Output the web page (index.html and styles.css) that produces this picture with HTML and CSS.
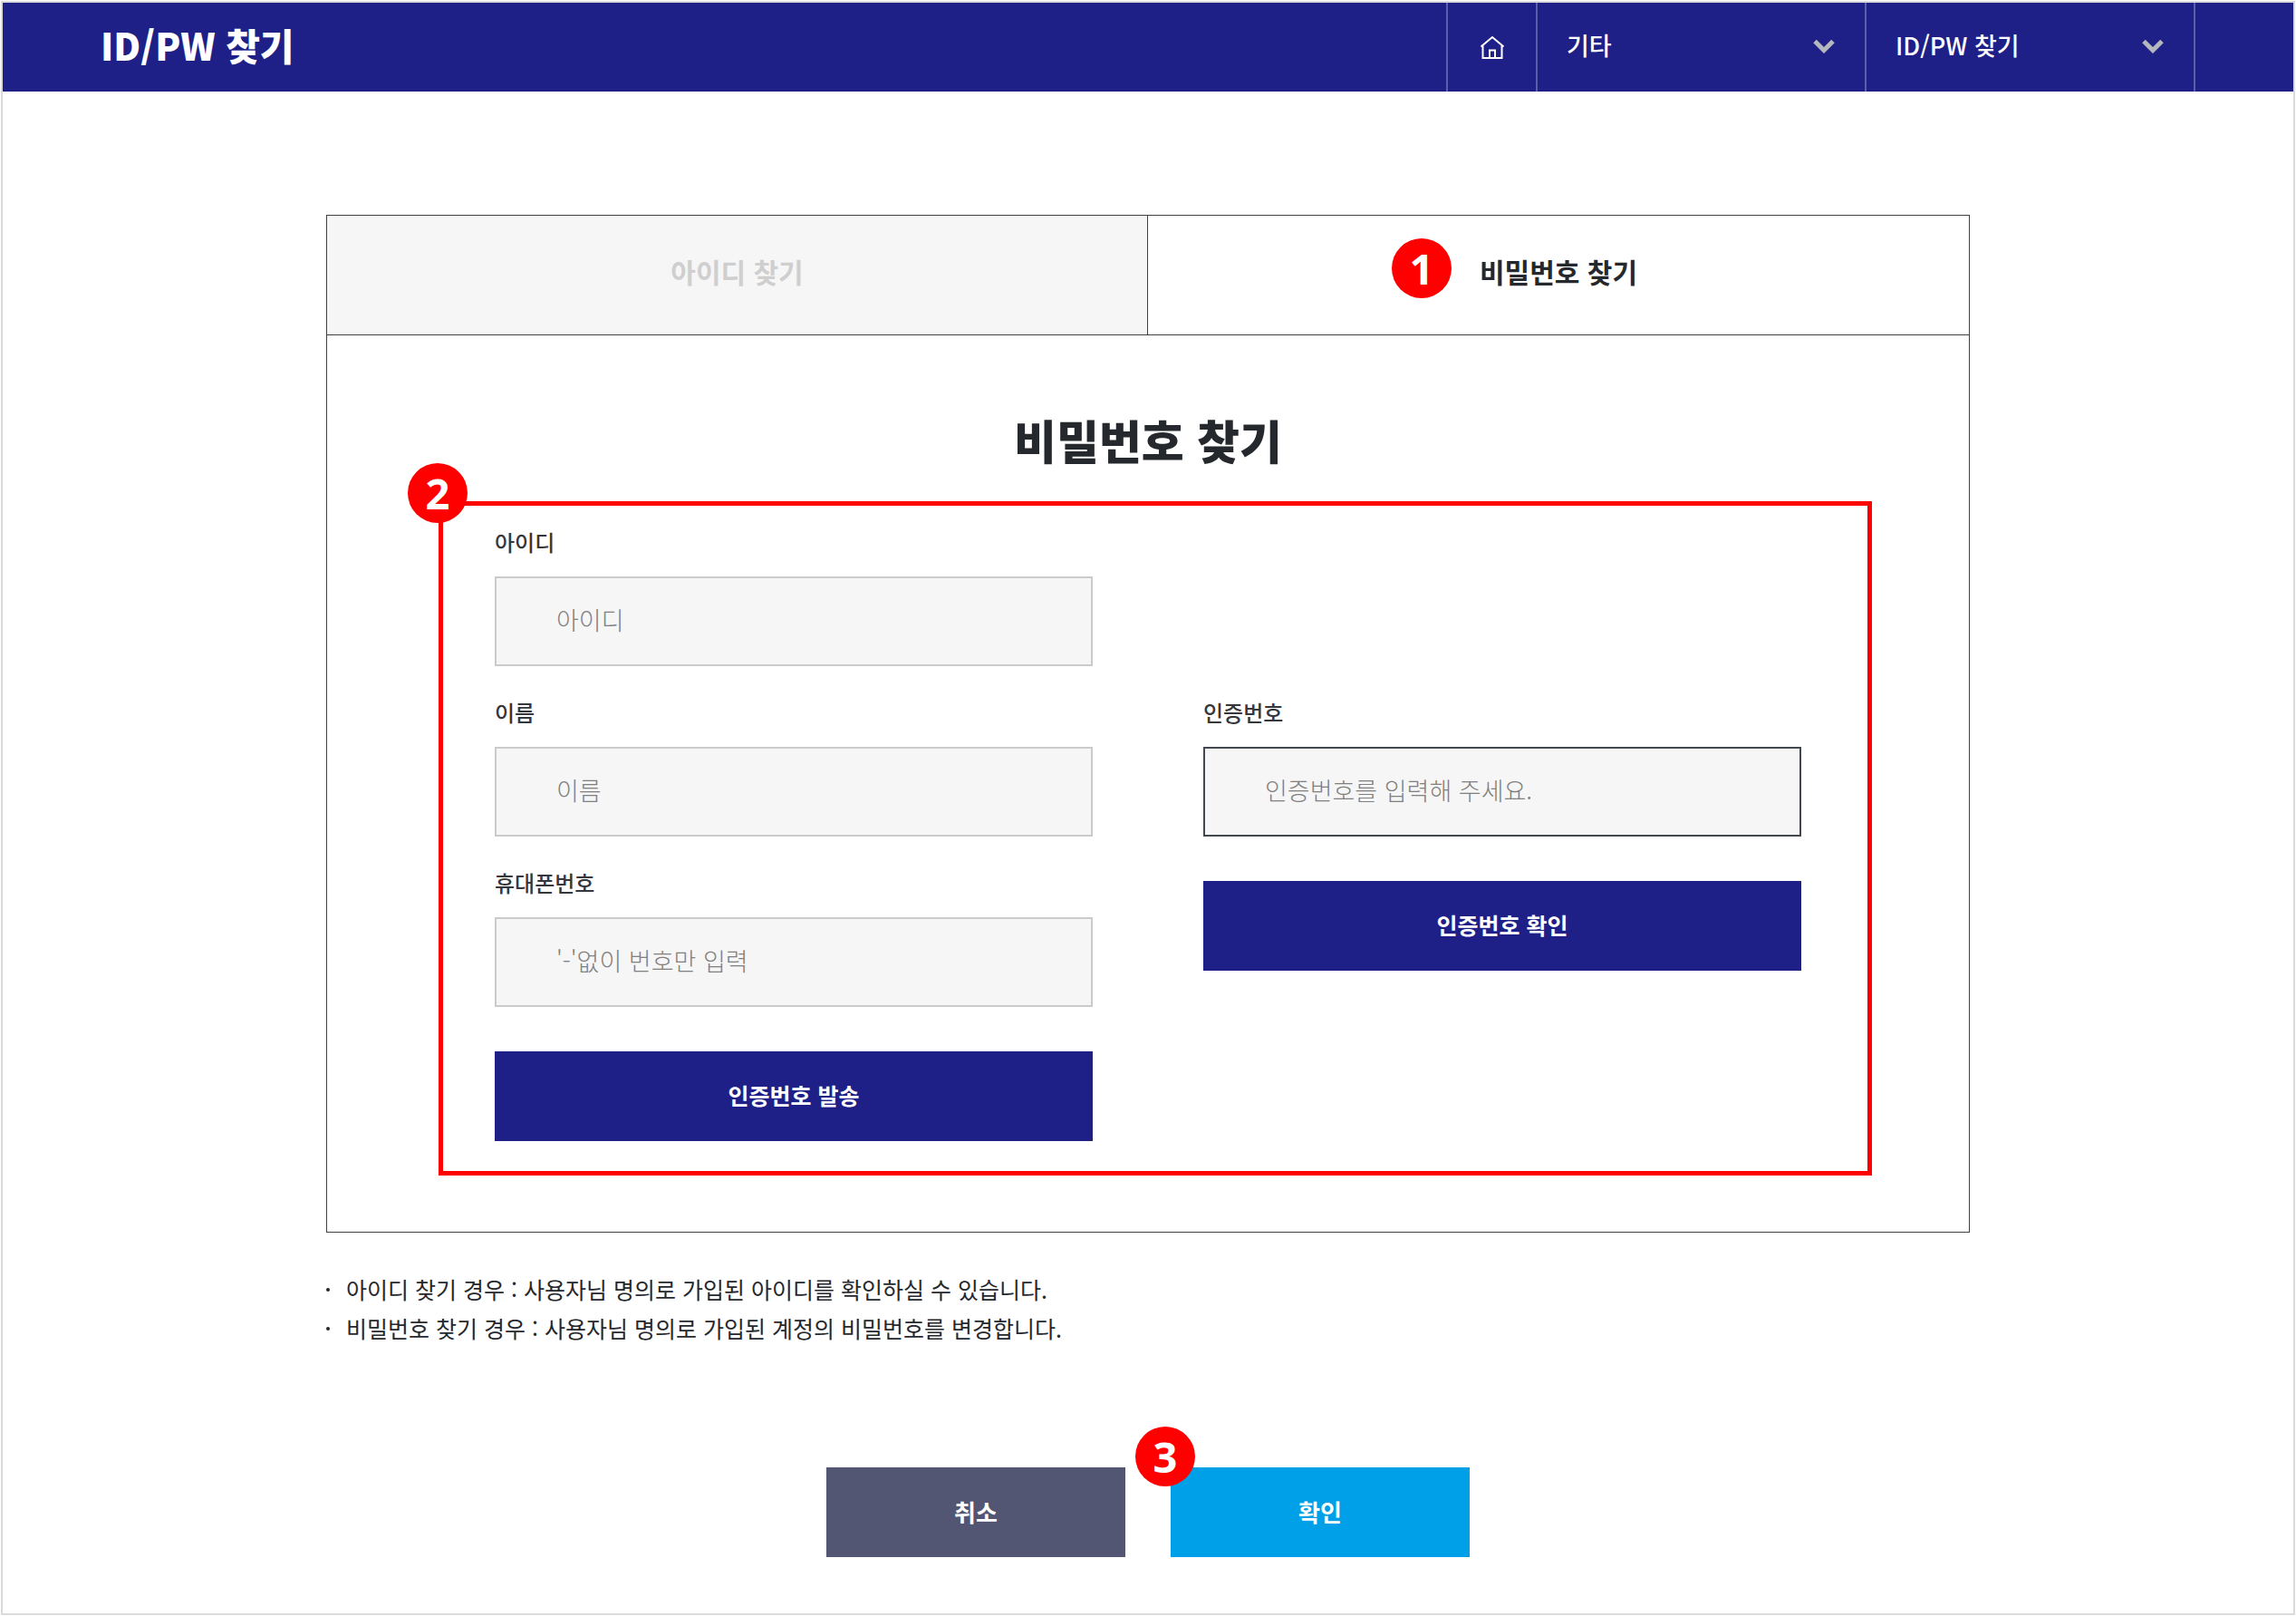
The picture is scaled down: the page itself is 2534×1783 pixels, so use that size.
FILE: index.html
```html
<!DOCTYPE html>
<html lang="ko">
<head>
<meta charset="utf-8">
<meta name="viewport" content="width=device-width, initial-scale=1">
<title>ID/PW 찾기</title>
<link rel="stylesheet" href="styles.css">
</head>
<body>
<div class="page">
  <header class="topbar">
    <h1 class="topbar-title">ID/PW 찾기</h1>
    <nav class="crumbs" aria-label="현재 위치">
      <a class="crumb-home" href="#" aria-label="홈">
        <svg class="home-icon" viewBox="0 0 28 27" aria-hidden="true">
          <path d="M1.5 12.5 14 2 26.500 12.500M3.500 11V25H24.500V11M11 25V16.500H17V25"/>
        </svg>
      </a>
      <div class="crumb">
        <select class="crumb-select" aria-label="메뉴">
          <option>기타</option>
        </select>
        <svg class="chevron" viewBox="0 0 24 16" aria-hidden="true"><path d="M2 2.500 12 12.500 22 2.500"/></svg>
      </div>
      <div class="crumb">
        <select class="crumb-select" aria-label="하위 메뉴">
          <option>ID/PW 찾기</option>
        </select>
        <svg class="chevron" viewBox="0 0 24 16" aria-hidden="true"><path d="M2 2.500 12 12.500 22 2.500"/></svg>
      </div>
    </nav>
  </header>

  <main class="content">
    <section class="panel">
      <div class="tabs" role="tablist">
        <button class="tab" type="button" role="tab" aria-selected="false">아이디 찾기</button>
        <button class="tab tab-active" type="button" role="tab" aria-selected="true">
          <span class="tab-label">비밀번호 찾기<span class="badge badge-tab">1</span></span>
        </button>
      </div>

      <h2 class="panel-title">비밀번호 찾기</h2>

      <form class="form" id="find-form">
        <span class="badge badge-form">2</span>
        <div class="column">
          <div class="field">
            <label class="label" for="user-id">아이디</label>
            <input class="input" id="user-id" type="text" placeholder="아이디">
          </div>
          <div class="field">
            <label class="label" for="user-name">이름</label>
            <input class="input" id="user-name" type="text" placeholder="이름">
          </div>
          <div class="field">
            <label class="label" for="user-phone">휴대폰번호</label>
            <input class="input" id="user-phone" type="tel" placeholder="'-'없이 번호만 입력">
          </div>
          <button class="send" type="button">인증번호 발송</button>
        </div>
        <div class="column column-verify">
          <div class="field">
            <label class="label" for="verify-code">인증번호</label>
            <input class="input input-strong" id="verify-code" type="text" placeholder="인증번호를 입력해 주세요.">
          </div>
          <button class="send" type="button">인증번호 확인</button>
        </div>
      </form>
    </section>

    <ul class="notes">
      <li class="note">아이디 찾기 경우 : 사용자님 명의로 가입된 아이디를 확인하실 수 있습니다.</li>
      <li class="note">비밀번호 찾기 경우 : 사용자님 명의로 가입된 계정의 비밀번호를 변경합니다.</li>
    </ul>

    <div class="actions">
      <button class="action action-cancel" type="button">취소</button>
      <div class="action-slot">
        <button class="action action-ok" type="submit" form="find-form">확인</button>
        <span class="badge badge-ok">3</span>
      </div>
    </div>
  </main>
</div>
</body>
</html>
```
FILE: styles.css
```css
:root {
  --navy: #1e2088;
  --ink: #25282d;
  --line: #3f4044;
  --red: #ff0000;
}

* {
  box-sizing: border-box;
}

body {
  margin: 0;
  padding: 1px;
  background: #fff;
  color: var(--ink);
  font-family: "Noto Sans CJK KR", sans-serif;
}

button,
input,
select {
  margin: 0;
  border: 0;
  border-radius: 0;
  font-family: inherit;
}

button {
  padding: 0;
  cursor: pointer;
}

.page {
  min-height: calc(100vh - 2px);
  border: 2px solid #dadada;
}

/* Top bar */
.topbar {
  display: flex;
  justify-content: space-between;
  height: 98px;
  padding: 0 108px;
  background: var(--navy);
  color: #fff;
}

.topbar-title {
  margin: 0;
  font-size: 41px;
  font-weight: 900;
  line-height: 92px;
}

.crumbs {
  display: flex;
  border-right: 2px solid #5c5ea8;
}

.crumb-home {
  display: flex;
  align-items: center;
  justify-content: center;
  width: 99px;
  border-left: 2px solid #5c5ea8;
}

.home-icon {
  width: 28px;
  height: 27px;
  fill: none;
  stroke: #fff;
  stroke-width: 2;
}

.crumb {
  display: grid;
  align-items: center;
  width: 363px;
  border-left: 2px solid #5c5ea8;
}

.crumb-select {
  grid-area: 1 / 1;
  width: 100%;
  height: 92px;
  align-self: start;
  padding: 0 72px 0 32px;
  appearance: none;
  background: transparent;
  color: #fff;
  font-size: 27px;
  font-weight: 500;
}

.chevron {
  grid-area: 1 / 1;
  justify-self: end;
  width: 24px;
  height: 16px;
  margin: 0 33px 2px 0;
  fill: none;
  stroke: #b4b7bd;
  stroke-width: 5;
  pointer-events: none;
}

/* Content */
.content {
  max-width: 1814px;
  margin: 0 auto;
  padding: 136px 0 62px;
}

.panel {
  border: 1px solid var(--line);
  padding-bottom: 62px;
}

.tabs {
  display: grid;
  grid-template-columns: 1fr 1fr;
  border-bottom: 1px solid var(--line);
}

.tab {
  height: 131px;
  padding-bottom: 9px;
  background: #fff;
  color: var(--ink);
  font-size: 30px;
  font-weight: 700;
}

.tab:first-child {
  border-right: 1px solid var(--line);
  background: #f6f6f6;
  color: #cfcfcf;
}

.tab-label {
  position: relative;
}

.panel-title {
  margin: 78px 0 31px;
  font-size: 51px;
  font-weight: 900;
  line-height: 74px;
  text-align: center;
}

.form {
  position: relative;
  display: grid;
  grid-template-columns: 1fr 1fr;
  gap: 122px;
  margin: 0 107px 0 123px;
  padding: 22px 73px 33px 57px;
  border: 5px solid var(--red);
}

.column {
  display: flex;
  flex-direction: column;
  gap: 33px;
}

/* Lines the code field up with the second field of the first column */
.column-verify {
  padding-top: 188px;
}

.field {
  display: flex;
  flex-direction: column;
  gap: 20px;
}

.label {
  font-size: 24px;
  font-weight: 500;
  line-height: 36px;
  color: #36373a;
}

.input {
  width: 100%;
  height: 99px;
  padding: 0 66px 4px;
  border: 2px solid #cbcbcb;
  background: #f6f6f6;
  color: var(--ink);
  font-size: 27px;
  font-weight: 300;
}

.input::placeholder {
  color: #808080;
  opacity: 1;
}

.input-strong {
  border-color: #43474e;
}

.send {
  height: 99px;
  margin-top: 16px;
  padding-bottom: 4px;
  background: var(--navy);
  color: #fff;
  font-size: 25px;
  font-weight: 700;
}

/* Notes */
.notes {
  margin: 41px 0 0;
  padding: 0;
  list-style: none;
}

.note {
  display: flex;
  align-items: center;
  gap: 18px;
  font-size: 25px;
  font-weight: 400;
  line-height: 43px;
}

.note::before {
  content: "";
  flex: none;
  width: 4px;
  height: 4px;
  border-radius: 50%;
  background: var(--ink);
}

/* Bottom buttons */
.actions {
  display: flex;
  justify-content: center;
  gap: 50px;
  margin-top: 132px;
}

.action-slot {
  position: relative;
}

.action {
  width: 330px;
  height: 99px;
  padding-bottom: 2px;
  color: #fff;
  font-size: 26px;
  font-weight: 700;
}

.action-cancel {
  background: #535672;
}

.action-ok {
  display: block;
  background: #00a0e9;
}

/* Numbered markers */
.badge {
  position: absolute;
  width: 66px;
  height: 66px;
  border-radius: 50%;
  background: var(--red);
  color: #fff;
  font-family: "Noto Sans", sans-serif;
  font-size: 47px;
  font-weight: 700;
  line-height: 66px;
  text-align: center;
}

.badge-tab {
  top: -14px;
  right: calc(100% + 31px);
}

.badge-form {
  top: -47px;
  left: -39px;
}

.badge-ok {
  top: -45px;
  left: -39px;
}
```
